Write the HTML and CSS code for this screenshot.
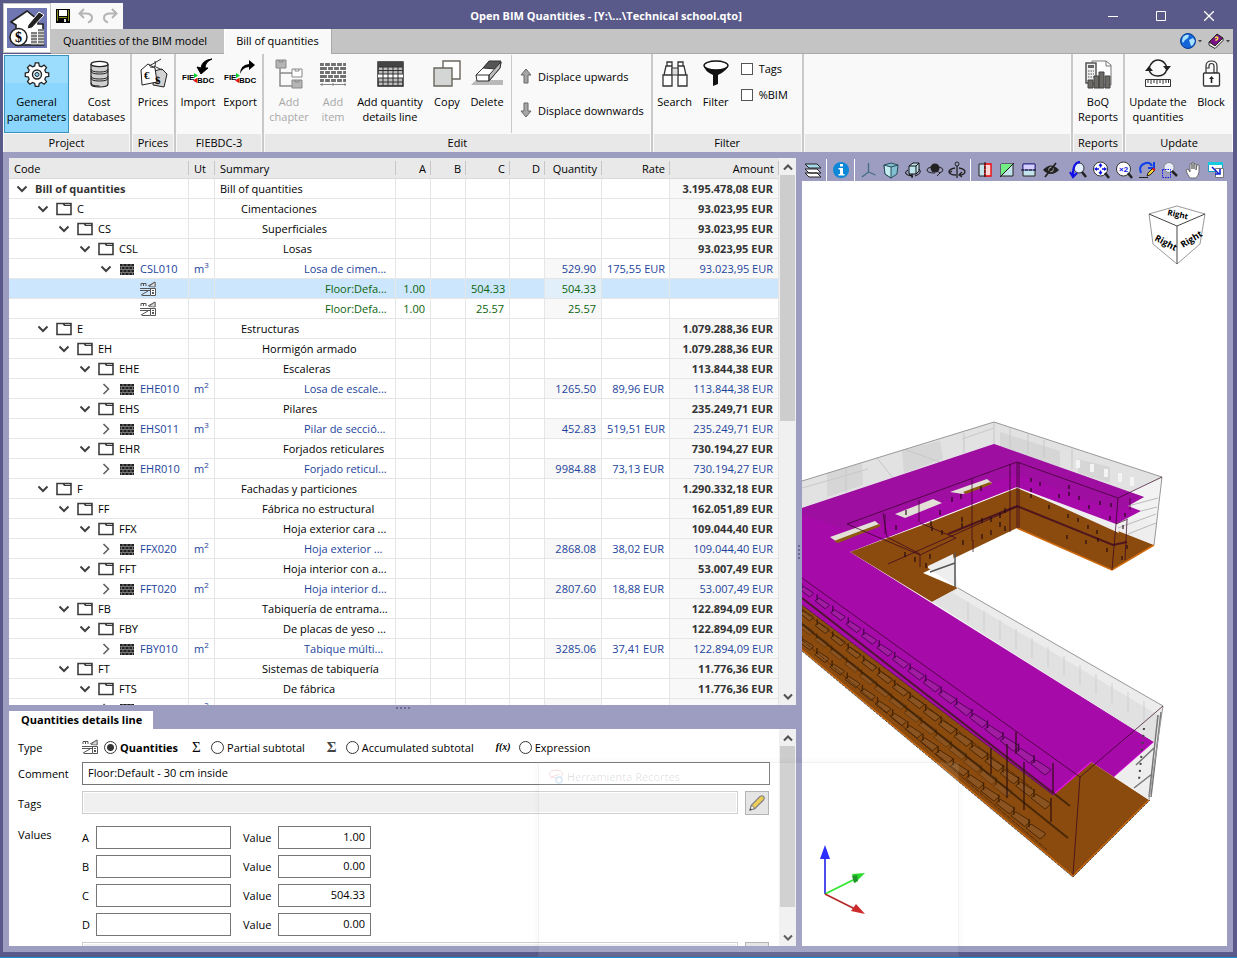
FILE: index.html
```html
<!DOCTYPE html>
<html lang="en">
<head>
<meta charset="utf-8">
<title>Open BIM Quantities</title>
<link rel="stylesheet" href="styles.css">
</head>
<body>
<svg class="sprite" aria-hidden="true">
  <symbol id="i-down" viewBox="0 0 12 12"><path d="M1.5 3.5 6 8l4.500-4.500" fill="none" stroke="#404040" stroke-width="2"/></symbol>
  <symbol id="i-right" viewBox="0 0 12 12"><path d="M3.500 1 8.500 6l-5 5" fill="none" stroke="#606060" stroke-width="1.600"/></symbol>
  <symbol id="i-folder" viewBox="0 0 16 16"><path d="M1 2.500h14v11H1z" fill="#fff" stroke="#3c3c3c" stroke-width="1.600"/><path d="M6 2h9v3H8z" fill="#3c3c3c"/><path d="M9 3.500h5" stroke="#bbb"/></symbol>
  <symbol id="i-wall" viewBox="0 0 16 16"><path d="M1 3h14v11H1z" fill="#222"/><path d="M1 5.500h14M1 8.500h14M1 11.500h14M4 3v2M8 3v2M12 3v2M2.500 6v2M6 6v2M10 6v2M13.500 6v2M4 9v2M8 9v2M12 9v2M2.500 12v2M6 12v2M10 12v2M13.500 12v2" stroke="#ccc" stroke-width=".5"/></symbol>
  <symbol id="i-detail" viewBox="0 0 16 16"><path d="M1 5V2.500h5V5M3.500 2.500V5M8 5l7-4v5M0 7.500h11M0 9.500h10M1 14l7-4M2 14.500h8" fill="none" stroke="#555"/><path d="M9 5.500 15 1v5z" fill="#ddd" stroke="#555" stroke-width=".7"/><path d="M10.500 7.500h5v7h-5z" fill="#fff" stroke="#555"/><path d="M12 9h2v1h-2zM12 11h2v2h-2z" fill="#555"/></symbol>
</svg>

<div class="window">
  <header class="header">
    <button class="app-button" aria-label="Application menu">
      <svg viewBox="0 0 40 40" width="40" height="40"><path d="M0 0h40v40H0z" fill="#6f76b2"/><path d="M4 14 20 3l11 9v4h5v21H9V17z" fill="#fff" stroke="#222" stroke-width="1.600"/><path d="m21 17 11-13 5 3-12 13-5 1z" fill="#222" stroke="#fff"/><path d="M24 24h6v13h-6zM31 21h6v16h-6z" fill="#ccc"/><path d="M24 25h6M24 28h6M24 31h6M24 34h6M31 22h6M31 25h6M31 28h6M31 31h6M31 34h6M18 37h20" stroke="#333"/><circle cx="11.500" cy="29" r="8.500" fill="#fff" stroke="#222" stroke-width="1.500"/><text x="11.500" y="34" text-anchor="middle" class="svg-dollar">$</text></svg>
    </button>
    <div class="quick">
      <button class="flat" aria-label="Save"><svg viewBox="0 0 14 14" width="14" height="14"><path d="M0 0h14v14H0z" fill="#000"/><path d="M1 1h1v11H1zM12 1h1v11h-1zM3 8h8v1H3z" fill="#8c8c20"/><path d="M3 1h8v6H3z" fill="#fff"/><path d="M8 10h2v3H8z" fill="#ddd"/></svg></button>
      <button class="flat" aria-label="Undo"><svg viewBox="0 0 16 16" width="16" height="16"><path d="M6 1 1.500 5.500 6 10M2 5.500h6q6 0 6 4.500 0 3-4 4.500" fill="none" stroke="#b4b4b4" stroke-width="2"/></svg></button>
      <button class="flat" aria-label="Redo"><svg viewBox="0 0 16 16" width="16" height="16"><path d="m10 1 4.500 4.500L10 10M14 5.500H8Q2 5.500 2 10q0 3 4 4.500" fill="none" stroke="#b4b4b4" stroke-width="2"/></svg></button>
    </div>
    <h1 class="title">Open BIM Quantities - [Y:\...\Technical school.qto]</h1>
    <div class="controls">
      <button class="flat" aria-label="Minimize"><svg viewBox="0 0 10 10" width="10" height="10"><path d="M0 5.500h10" stroke="#fff"/></svg></button>
      <button class="flat" aria-label="Maximize"><svg viewBox="0 0 10 10" width="10" height="10"><path d="M.5.5h9v9h-9z" fill="none" stroke="#fff"/></svg></button>
      <button class="flat" aria-label="Close"><svg viewBox="0 0 10 10" width="10" height="10"><path d="m0 0 10 10M10 0 0 10" stroke="#fff" stroke-width="1.300"/></svg></button>
    </div>
    <nav class="tabs">
      <button class="tab">Quantities of the BIM model</button>
      <button class="tab tab-on">Bill of quantities</button>
      <div class="tab-tools">
        <button class="flat" aria-label="Language"><svg viewBox="0 0 22 16" width="22" height="16"><circle cx="8" cy="8" r="7.500" fill="#1565d8" stroke="#0a3d91"/><path d="M3 4q3-3 6-2l-1 3-3 2-2 3-1-2zM9 7l4-2 2 3-2 4-2 1-1-3z" fill="#a8e2ff"/><path d="m18 7 4 0-2 2.500z" fill="#444"/></svg></button>
        <button class="flat" aria-label="Help"><svg viewBox="0 0 22 16" width="22" height="16"><path d="M1 9 9 1l6 4-8 8z" fill="#7c1283" stroke="#222"/><path d="M1 9v3l6 3.500 8-8V5l-8 8z" fill="#fff" stroke="#222"/><path d="M7 5q2-2 3 0 0 1.500-2 2v1" fill="none" stroke="#f5e64a" stroke-width="1.300"/><path d="m18 7 4 0-2 2.500z" fill="#444"/></svg></button>
      </div>
    </nav>
  </header>

  <section class="ribbon">
    <div class="group">
      <div class="tools">
        <button class="tool tool-lg tool-on"><svg viewBox="0 0 32 32"><path d="m14 3h4l.7 3.500 2.600 1.100 3-2 2.900 2.900-2 3 1.100 2.600 3.500.7v4l-3.500.7-1.100 2.600 2 3-2.900 2.900-3-2-2.600 1.100-.7 3.500h-4l-.7-3.500-2.600-1.100-3 2-2.900-2.900 2-3-1.100-2.600-3.500-.7v-4l3.500-.7 1.100-2.600-2-3 2.900-2.900 3 2 2.600-1.100z" transform="translate(2.400 2.400) scale(.85)" fill="#fff" stroke="#222" stroke-width="1.500"/><circle cx="16" cy="16.500" r="4.500" fill="#e8f6fd" stroke="#222" stroke-width="1.400"/><circle cx="16" cy="16.500" r="2" fill="#8ad6ff" stroke="#222"/></svg>General<br>parameters</button>
        <button class="tool tool-lg"><svg viewBox="0 0 32 32"><path d="M8 6v20q0 3 8.500 3t8.500-3V6" fill="#d0d0d0" stroke="#222" stroke-width="1.200"/><ellipse cx="16.500" cy="6" rx="8.500" ry="2.700" fill="#fff" stroke="#222" stroke-width="1.200"/><path d="M8 11q0 3 8.500 3t8.500-3M8 13q0 3 8.500 3t8.500-3M8 18q0 3 8.500 3t8.500-3M8 20q0 3 8.500 3t8.500-3M8 25q0 3 8.500 3" fill="none" stroke="#222"/></svg>Cost<br>databases</button>
      </div><div class="caption">Project</div>
    </div>
    <div class="group">
      <div class="tools">
        <button class="tool tool-xs"><svg viewBox="0 0 32 32"><path d="m17 13 8-2 5 5-3 13-11-2z" fill="#d2d2d2" stroke="#222"/><path d="m4 12 7-6 7 4 2 14-15 3z" fill="#fff" stroke="#222"/><path d="M12 8q6-3 12-7M13 9q7 2 5-6M17 8l8 4" fill="none" stroke="#333"/><text x="7" y="21" class="svg-coin">€</text><text x="18" y="26" class="svg-coin">$</text></svg>Prices</button>
      </div><div class="caption">Prices</div>
    </div>
    <div class="group">
      <div class="tools">
        <button class="tool tool-sm"><svg viewBox="0 0 32 32"><path d="M30 1q-10 1-11 9l-4-1 4 7 7-6-3 0q0-6 7-9z" fill="#000" stroke="#000"/><text x="0" y="22" class="svg-fie">FIE</text><text x="15" y="25" class="svg-fie">BDC</text><path d="m12 15 4 2.500-4 2.500z" fill="#0bd32b"/><path d="m15 20-4 2.500 4 2.500z" fill="#e01515"/></svg>Import</button>
        <button class="tool tool-sm"><svg viewBox="0 0 32 32"><path d="M16 16q0-9 9-10V2l6 5-6 5V9q-6 0-9 7z" fill="#000"/><text x="0" y="22" class="svg-fie">FIE</text><text x="15" y="25" class="svg-fie">BDC</text><path d="m12 15 4 2.500-4 2.500z" fill="#0bd32b"/><path d="m15 20-4 2.500 4 2.500z" fill="#e01515"/></svg>Export</button>
      </div><div class="caption">FIEBDC-3</div>
    </div>
    <div class="group">
      <div class="tools">
        <button class="tool tool-md" disabled><svg viewBox="0 0 32 32"><path d="M7 9v19h12M7 15h12" fill="none" stroke="#8a8a8a" stroke-width="1.500"/><path d="M3 2h10v8H3z" fill="#b5b5b5" stroke="#888"/><path d="M19 11h10v8H19z" fill="#fff" stroke="#888"/><path d="M19 22h10v8H19z" fill="#b5b5b5" stroke="#888"/><path d="M6 2v2h4V2M22 11v2h4v-2M22 22v2h4v-2" fill="none" stroke="#888"/></svg>Add<br>chapter</button>
        <button class="tool tool-xs" disabled><svg viewBox="0 0 32 32"><path d="M3 5h26v19H3z" fill="#707070"/><path d="M3 8.500h26M3 12.500h26M3 16.500h26M3 20.500h26M7.500 5v3M13.500 5v3M19.500 5v3M25.500 5v3M10.500 9v3M16.500 9v3M22.500 9v3M7.500 13v3M13.500 13v3M19.500 13v3M25.500 13v3M10.500 17v3M16.500 17v3M22.500 17v3M7.500 21v3M13.500 21v3M19.500 21v3M25.500 21v3" stroke="#f9f9f9" stroke-width="1.200"/><path d="M3 26.500h26M5 25v3M16 25v3M28 25v3" stroke="#888"/></svg>Add<br>item</button>
        <button class="tool tool-xl"><svg viewBox="0 0 32 32"><path d="M4 4h25v24H4z" fill="#bcbcbc" stroke="#222" stroke-width="1.400"/><path d="M4 4h25v5H4z" fill="#444"/><path d="M4 16h25v4H4z" fill="#fff"/><path d="M4 9h25M4 12.500h25M4 16h25M4 20h25M4 24h25M9 9v19M14 9v19M19 9v19M24 9v19" stroke="#333"/></svg>Add quantity<br>details line</button>
        <button class="tool tool-xs"><svg viewBox="0 0 32 32"><path d="M12 3h17v18H12z" fill="#fff" stroke="#6a665c" stroke-width="1.400"/><path d="M3 10h18v18H3z" fill="#d4d6d5" stroke="#6a665c" stroke-width="1.400"/></svg>Copy</button>
        <button class="tool tool-xs"><svg viewBox="0 0 32 32"><path d="M0 27 5 22h27v5z" fill="#b9b9b9"/><path d="m5 17 13-13h12l-1 6-11 13H6z" fill="#fff" stroke="#333"/><path d="m12 10 6-7h12l-5 8z" fill="#555" stroke="#333"/><path d="m18 17 12-13-1 6-11 13z" fill="#bbb" stroke="#333"/><path d="M5 17h13v6" fill="none" stroke="#333"/></svg>Delete</button>
        <div class="stack">
          <button class="mini"><svg viewBox="0 0 12 16" width="12" height="16"><path d="m6 1 5 6H8v8H4V7H1z" fill="#a6a6a6" stroke="#666"/></svg>Displace upwards</button>
          <button class="mini"><svg viewBox="0 0 12 16" width="12" height="16"><path d="m6 15 5-6H8V1H4v8H1z" fill="#a6a6a6" stroke="#666"/></svg>Displace downwards</button>
        </div>
      </div><div class="caption">Edit</div>
    </div>
    <div class="group group-filter">
      <div class="tools">
        <button class="tool tool-sm"><svg viewBox="0 0 32 32"><path d="M8 4h5v4H8zM19 4h5v4h-5zM7 8h6v9H5zM19 8h6l2 9h-8zM4 17h9v11H4zM19 17h9v11h-9z" fill="#fff" stroke="#333" stroke-width="1.300"/><path d="M13 10h6v7h-6z" fill="#ddd" stroke="#333"/></svg>Search</button>
        <button class="tool tool-xs"><svg viewBox="0 0 32 32"><path d="M4 7q0 6 9 10v11l5-2v-9q10-5 10-10" fill="#111"/><ellipse cx="16" cy="7.500" rx="12" ry="4.500" fill="#fff" stroke="#111" stroke-width="1.400"/></svg>Filter</button>
        <div class="checks">
          <label class="check"><input type="checkbox">Tags</label>
          <label class="check"><input type="checkbox">%BIM</label>
        </div>
      </div><div class="caption">Filter</div>
    </div>
    <div class="group group-fill"><div class="tools"></div><div class="caption"></div></div>
    <div class="group">
      <div class="tools">
        <button class="tool tool-md"><svg viewBox="0 0 32 32"><path d="M10 3h14l5 4v20H10z" fill="#fff" stroke="#777"/><path d="M24 3v5h5" fill="none" stroke="#777"/><path d="M4 5h10v20H4z" fill="#eee" stroke="#555" stroke-width="1.500"/><path d="M6 7h6v3H6z" fill="#666"/><path d="M6 13h6M6 16h6M6 19h6" stroke="#555" stroke-dasharray="1.500 1"/><path d="M6 22h5v8H6zM12 18h5v12h-5zM17 14h5v16h-5zM23 18h5v12h-5z" fill="#6d6b66" stroke="#444"/></svg>BoQ<br>Reports</button>
      </div><div class="caption">Reports</div>
    </div>
    <div class="group">
      <div class="tools">
        <button class="tool tool-lg"><svg viewBox="0 0 32 32"><path d="M7 10q3-8 9-8t9 7M25 11q-2 7-9 7t-9-6" fill="none" stroke="#222" stroke-width="1.400"/><path d="m21 8 8 0-4 5zM3 13l4-5 4 5z" fill="#222"/><path d="M3.500 21.500h25v7h-25z" fill="#fff" stroke="#333"/><path d="M6 22v3M9 22v4M12 22v3M15 22v4M18 22v3M21 22v4M24 22v3M26.500 22v3" stroke="#333"/></svg>Update the<br>quantities</button>
        <button class="tool tool-sm"><svg viewBox="0 0 32 32"><path d="M11 15V8q0-5 5.500-5T22 8v7h-3V8q0-2.500-2.500-2.500T14 8v2h-3" fill="#fff" stroke="#333" stroke-width="1.200"/><rect x="8.500" y="15" width="16" height="13" rx="1" fill="#fff" stroke="#333" stroke-width="1.300"/><path d="M16.500 25v-5" stroke="#222" stroke-width="1.600"/><path d="m14 21 2.500-3 2.500 3z" fill="#222"/></svg>Block</button>
      </div><div class="caption">Update</div>
    </div>
  </section>

  <main class="work">
    <div class="left">
      <section class="pane grid-pane">
        <div class="grid-clip">
          <table class="grid">
            <colgroup><col class="c-code"><col class="c-ut"><col class="c-sum"><col class="c-a"><col class="c-a"><col class="c-c"><col class="c-a"><col class="c-qty"><col class="c-rate"><col class="c-amt"></colgroup>
            <thead><tr><th class="l">Code</th><th class="l">Ut</th><th class="l">Summary</th><th>A</th><th>B</th><th>C</th><th>D</th><th>Quantity</th><th>Rate</th><th>Amount</th></tr></thead>
            <tbody id="rows"></tbody>
          </table>
        </div>
        <div class="scroll">
          <button class="flat" aria-label="Scroll up"><svg viewBox="0 0 10 8" width="10" height="8"><path d="M1 6.500 5 2.500l4 4" fill="none" stroke="#505050" stroke-width="2"/></svg></button>
          <div class="track"><div class="thumb thumb-grid"></div></div>
          <button class="flat" aria-label="Scroll down"><svg viewBox="0 0 10 8" width="10" height="8"><path d="m1 1.500 4 4 4-4" fill="none" stroke="#505050" stroke-width="2"/></svg></button>
        </div>
      </section>
      <div class="split-h"><i></i><i></i><i></i><i></i></div>
      <section class="details">
        <h2 class="details-tab">Quantities details line</h2>
        <div class="pane details-body">
          <form class="form">
            <span class="f-label">Type</span>
            <div class="types">
              <svg class="ico" aria-hidden="true"><use href="#i-detail"/></svg><label class="radio radio-on"><input type="radio" name="type" checked>Quantities</label>
              <span class="sigma">Σ</span><label class="radio"><input type="radio" name="type">Partial subtotal</label>
              <span class="sigma sigma-2">Σ</span><label class="radio"><input type="radio" name="type">Accumulated subtotal</label>
              <span class="fx">f(x)</span><label class="radio"><input type="radio" name="type">Expression</label>
            </div>
            <label class="f-label" for="comment">Comment</label>
            <input class="text" id="comment" type="text" value="Floor:Default - 30 cm inside">
            <label class="f-label" for="tags">Tags</label>
            <div class="with-button"><input class="text text-off" id="tags" type="text" disabled><button type="button" class="edit" aria-label="Edit tags"><svg viewBox="0 0 18 18" width="18" height="18"><path d="m2 16 1.500-5L12 2.500q2-1.500 3.500 0t0 3.500L7 14.500z" fill="#edc846" stroke="#777" stroke-width="1.200"/><path d="m2 16 1.500-5L7 14.500z" fill="#f3f3f3" stroke="#666"/><path d="m1.500 16.500 1-2.500 1.500 1.500z" fill="#444"/></svg></button></div>
            <span class="f-label f-top">Values</span>
            <div class="values">
              <label for="a">A</label><input class="text" id="a" type="text"><label for="av">Value</label><input class="text num" id="av" type="text" value="1.00">
              <label for="b">B</label><input class="text" id="b" type="text"><label for="bv">Value</label><input class="text num" id="bv" type="text" value="0.00">
              <label for="c">C</label><input class="text" id="c" type="text"><label for="cv">Value</label><input class="text num" id="cv" type="text" value="504.33">
              <label for="d">D</label><input class="text" id="d" type="text"><label for="dv">Value</label><input class="text num" id="dv" type="text" value="0.00">
            </div>
            <span class="f-label"></span>
            <div class="with-button"><input class="text text-off" type="text" disabled aria-label="Remarks"><button type="button" class="edit" aria-label="Edit remarks"></button></div>
          </form>
          <div class="scroll">
            <button class="flat" aria-label="Scroll up"><svg viewBox="0 0 10 8" width="10" height="8"><path d="M1 6.500 5 2.500l4 4" fill="none" stroke="#505050" stroke-width="2"/></svg></button>
            <div class="track"><div class="thumb thumb-form"></div></div>
            <button class="flat" aria-label="Scroll down"><svg viewBox="0 0 10 8" width="10" height="8"><path d="m1 1.500 4 4 4-4" fill="none" stroke="#505050" stroke-width="2"/></svg></button>
          </div>
        </div>
      </section>
    </div>

    <div class="split-v"><i></i><i></i><i></i><i></i></div>

    <section class="viewer">
      <div class="viewbar">
        <button class="flat" aria-label="Layers"><svg viewBox="0 0 18 18"><path d="m1 12 4 4h12l-4-4zM1 8l4 4h12l-4-4z" fill="#fff" stroke="#222"/><path d="m1 3 4 4h12l-4-4z" fill="#a5dbe8" stroke="#222"/></svg></button><span class="bar-sep"></span>
        <button class="flat" aria-label="Information"><svg viewBox="0 0 18 18"><circle cx="9" cy="9" r="8" fill="#0d87d8"/><path d="M8 3h3v2.500H8zM6.500 7H11v6h1.500v1.500h-6V13H8V8.500H6.500z" fill="#fff"/></svg></button><span class="bar-sep"></span>
        <button class="flat" aria-label="Axes"><svg viewBox="0 0 18 18"><path d="M8.500 2v9L2 16M8.500 11l7 3" fill="none" stroke="#406e80" stroke-width="1.300"/></svg></button>
        <button class="flat" aria-label="Box view"><svg viewBox="0 0 18 18"><path d="m2 4 7-2 7 2-1 9-6 4-6-4z" fill="#82bfd0" stroke="#294b58"/><path d="m2 4 7 2v11l-6-4z" fill="#c4edf2" stroke="#294b58"/><path d="m9 6 7-2" stroke="#294b58"/></svg></button>
        <button class="flat" aria-label="Orbit box"><svg viewBox="0 0 18 18"><path d="m5 5 4-3h6v8l-3 3H5z" fill="#bde3ed" stroke="#111"/><path d="M5 5h7v8M12 5l3-3M4 9q-4 2-2 4 2 2 7 2M15 8q4 4-4 7M8 13v4M5 13l4 3" fill="none" stroke="#111"/></svg></button>
        <button class="flat" aria-label="Orbit"><svg viewBox="0 0 18 18"><circle cx="9" cy="7" r="4.500" fill="#222"/><path d="M5 6q-4 1-4 3 0 3 8 3M13 6q4 1 4 3t-4 3M11 10l3 2-3 3" fill="none" stroke="#222"/></svg></button>
        <button class="flat" aria-label="Turn"><svg viewBox="0 0 18 18"><circle cx="9" cy="3" r="2" fill="none" stroke="#222"/><path d="M9 5v12M7 7q-6 1-6 4 1 3 7 3M11 7q6 1 6 4-1 3-5 3M14 11l-3 3 3 2M4 10l-3 2" fill="none" stroke="#222" stroke-width="1.300"/></svg></button><span class="bar-sep"></span>
        <button class="flat" aria-label="Vertical section"><svg viewBox="0 0 18 18"><path d="M3 3h6v12H3z" fill="#c3e3ed" stroke="#222"/><path d="M9 3h6v12H9z" fill="#ffd5d5" stroke="#f00000" stroke-width="1.300"/><path d="M9 1v16" stroke="#111" stroke-dasharray="3 1"/></svg></button>
        <button class="flat" aria-label="Diagonal section"><svg viewBox="0 0 18 18"><path d="M3 3h12v12H3z" fill="#c3e3ed" stroke="#222"/><path d="M3 3h12L3 15z" fill="#73ee85"/><path d="M2 16 16 2" stroke="#111"/></svg></button>
        <button class="flat" aria-label="Horizontal section"><svg viewBox="0 0 18 18"><path d="M3 3h12v12H3z" fill="#c3e3ed" stroke="#222"/><path d="M3 3h12v6H3z" fill="#d5cfff" stroke="#3030a0"/><path d="M1 9h16" stroke="#111" stroke-dasharray="3 1"/></svg></button>
        <button class="flat" aria-label="Hide"><svg viewBox="0 0 18 18"><path d="M1 9q8-9 16 0-8 8-16 0z" fill="#222"/><circle cx="9" cy="8.500" r="2.300" fill="none" stroke="#aaa"/><path d="M3 16 14 2" stroke="#222" stroke-width="1.700"/></svg></button>
        <span class="bar-group">
        <button class="flat" aria-label="Previous zoom"><svg viewBox="0 0 18 18"><circle cx="10" cy="7" r="5" fill="#e4efff" stroke="#333"/><path d="m13 11 4 5" stroke="#222" stroke-width="2.500"/><path d="M11 1Q4 1 4 14M1 11l3 5 4-4" fill="none" stroke="#1010e8" stroke-width="2.200"/></svg></button>
        <button class="flat" aria-label="Zoom extents"><svg viewBox="0 0 18 18"><circle cx="8.500" cy="8" r="7" fill="#fff" stroke="#333"/><path d="m13 12 4 5" stroke="#222" stroke-width="2.500"/><path d="M8.500 3v10M3.500 8h10" stroke="#1010e8" stroke-width="1.600" stroke-dasharray="3.500 3"/><path d="m6.500 5 2-3 2 3zM6.500 11l2 3 2-3zM5 6 2 8l3 2zM12 6l3 2-3 2z" fill="#1010e8"/></svg></button>
        <button class="flat" aria-label="Zoom x2"><svg viewBox="0 0 18 18"><circle cx="8.500" cy="8" r="7" fill="#fff" stroke="#333"/><path d="m13 12 4 5" stroke="#222" stroke-width="2.500"/><text x="4" y="11" class="svg-x2">×2</text></svg></button>
        <button class="flat" aria-label="Redraw"><svg viewBox="0 0 18 18"><path d="M3 12Q0 4 8 2q4-1 6 3M16 1v6h-6" fill="none" stroke="#1040e8" stroke-width="2"/><path d="M1 16.500h9" stroke="#222"/><path d="m9 15 1-3 5-5 2 2-5 5z" fill="#f3d336" stroke="#222"/><path d="m14 8 1.500-1.500 2 2L16 10z" fill="#e01515"/></svg></button>
        <button class="flat" aria-label="Zoom window"><svg viewBox="0 0 18 18"><circle cx="8" cy="6.500" r="5" fill="#e6ecfb" stroke="#888"/><path d="m11 10 5 5" stroke="#222" stroke-width="2.500"/><path d="M1.500 8.500h8v8h-8z" fill="none" stroke="#1010e8" stroke-dasharray="1.500 1"/></svg></button>
        <button class="flat" aria-label="Pan"><svg viewBox="0 0 18 18"><path d="M6 17Q3 13 2 9l2-1 2 3V3q1-1 2 0v5V2q1-1 2 0v6V3q1-1 2 0v6l1-5q1-1 2 0v7q-1 4-3 6z" fill="#fff" stroke="#555" stroke-width=".8"/></svg></button>
        <button class="flat" aria-label="Export view"><svg viewBox="0 0 18 18"><path d="M1.500 1.500h14v9h-14z" fill="#fff" stroke="#16a0bf"/><path d="M1 1h15v3H1z" fill="#16cbe0"/><path d="M8.500 7.500h8v9h-8z" fill="#fff" stroke="#777"/><path d="m5 6 7 7M8 13h5V8" fill="none" stroke="#1025d0" stroke-width="1.600"/></svg></button>
        </span>
      </div>
      <svg class="scene" viewBox="802 181 425 765" preserveAspectRatio="none" role="img" aria-label="3D model of the building">
        <g id="cube"><path d="m1149 214 28-8 28 8-5 30-23 20-24-20z" fill="#fff" stroke="#999"/><path d="m1149 214 28 12 28-12M1177 226v38" fill="none" stroke="#444"/>
          <text transform="translate(1154 240) rotate(28)" class="svg-face">Right</text><text transform="translate(1183 248) rotate(-32)" class="svg-face">Right</text><text transform="translate(1167 215) rotate(12)" class="svg-face svg-face-top">Right</text></g>
        <path d="M802 481 994 422l168 55-8 68-38-20-122-81-192 64z" fill="#e2e2e2"/>
        <path d="m1162 477-44 20 0 42 36 6z" fill="#f2f2f2"/>
        <path d="m827 473 35-10 1 22-36 12zM902 450l38-9 3 18-39 14zM1000 432l60 19v16l-60-20zM1078 459l32 8v16l-32-10z" fill="#d6d6d6"/>
        <path d="m802 488 66-19M962 439l32-11M994 422v22M964 433v20M906 450l34 12M877 458l16 20M846 468v24M1010 428v20M1028 434v20M1044 440v18M1072 449v20" stroke="#c8c8c8" fill="none"/>
        <path d="M1076 460h4v8h-4zM1090 464h4v8h-4zM1104 469h4v8h-4zM1118 473h4v9h-4zM1130 477h4v9h-4z" fill="#f4f4f4"/>
        <path d="M928 523 1017 488 1154 545 1112 570 1017 528 923 573 958 588 932 602 850 552z" fill="#8c4b0e"/>
        <path d="m1017 487 99 37 3 9z" fill="#eee"/><path d="m1116 524 26-7 15 8-3 20-36-14z" fill="#eee"/>
        <path d="m1128 506 30-8M1141 511l16-4M1118 528l38-14M1128 534l28-11" stroke="#bbb" fill="none"/>
        <path d="m928 566 25-12 5 34-30-20z" fill="#eee"/><path d="m930 572 25-9M955 553v34" stroke="#555" stroke-width="1.500" fill="none"/>
        <path d="m802 508 192-64 150 53-16 9 13 5-25 13-99-37-92 36-75 29 304 190-40 35-23-15-38 33-251-190z" fill="#a60aa8"/>
        <path d="m802 508 192-64 150 53-28 14-99-37-160 60-55-20z" fill="#951199" opacity=".5"/>
        <path d="m830 537 45-16 5 4-43 17zM895 514l38-15 9 4-37 15zM950 492l37-13 5 4-29 11z" fill="#e3e0d8"/><path d="m834 541 45-17 2 2-43 17zM963 492l27-10 2 2-26 10z" fill="#8c5a10"/>
        <path d="m802 605 251 190 38-33 23 15 35 23-76 77-271-227z" fill="#8c4b0e"/>
        <path d="m802 650 271 226 76-76" fill="none" stroke="#cf6a0c" stroke-width="1.500"/><path d="m802 651 271 226 77-77" fill="none" stroke="#555" stroke-dasharray="3 1"/>
        <path d="m1053 795 38-33M1114 777l40-35" stroke="#e010e0" stroke-width="1.500"/>
        <path d="m1017 528 95 42 42-25" fill="none" stroke="#cf6a0c" stroke-width="1.500"/>
        <path d="m958 588 205 118-9 36-222-140z" fill="#e1e1e1"/><path d="m958 588 205 118-3 10-207-123z" fill="#ececec"/>
        <path d="m1163 706-14 94-35-23 40-35z" fill="#eee"/>
        <path d="m1136 765 18-17M1134 788l18-14M1158 715l-9 82M1161 712l-10 85" stroke="#777" stroke-width="1.500" fill="none"/><path d="m1144 728-5 52" stroke="#444" stroke-dasharray="2 5" stroke-width="2"/>
        <path d="m802 481 192-59 168 55-8 68M958 588l205 118-14 94" fill="none" stroke="#999"/>
        <g fill="none" stroke="#330022" stroke-opacity=".7"><path d="m847 524 170-62 101 36 44-21M847 524l73 31 36-17-36-15M920 555v12M1118 498l-2 26-4 46M1017 462v66M1010 464v68M1019 462v66M888 564l129-57M802 578l278 199 83-71M1080 777l-7 98M802 605l251 190M883 513l4 24M972 479v62M919 500v22M973 540v12M885 514v20M887 537l33 17M1130 498v12M1127 520l-2 40M1116 524l12-5"/><path d="m948 534 69-28 96 39 14-3" stroke-width="2"/></g>
        <g id="details"></g>
        <path d="M825 894v-36" stroke="#1a1ae8" stroke-width="1.700"/><path d="m820 859 5-14 5 14z" fill="#1a1aff"/><path d="m825 894 30-15" stroke="#19e619" stroke-width="1.700"/><path d="m852 874 13-1-10 10z" fill="#16d816"/><path d="m852 876 5-1 1 6-4 2z" fill="#0b8a17"/><path d="m825 894 30 15" stroke="#b01212" stroke-width="1.700"/><path d="m856 904 9 10-14-3z" fill="#c81616"/>
      </svg>
    </section>
  </main>
  <div class="ghost"><svg viewBox="0 0 16 16" width="16" height="16"><ellipse cx="8" cy="5" rx="6.500" ry="4" fill="none" stroke="#e9a0a0"/><path d="m2 9 9-4" stroke="#e9a0a0"/><circle cx="11" cy="11" r="3" fill="none" stroke="#8ec3e9" stroke-width="1.500"/></svg>Herramienta Recortes</div>
</div>
<script src="app.js"></script>
</body>
</html>
```
FILE: styles.css
```css
* { box-sizing: border-box; }
body { margin: 0; font: 11px/15px "Open Sans", "Noto Sans", sans-serif; color: #000; }
button, input { font: inherit; color: inherit; }
button { padding: 0; border: 0; background: none; }
.sprite { display: none; }
.flat { display: grid; place-items: center; }
.window { position: relative; display: flex; flex-direction: column; height: 100vh; overflow: hidden; padding: 0 4px 5px 3px; background: #5a5a8a; border-bottom: 1px solid #1b8fd2; }

.header { display: grid; grid-template: 29px 25px / 48px 72px 1fr 144px; }
.app-button { grid-row: 1 / 3; display: grid; place-items: center; margin: 3px 0 1px; background: #fff; border: 1px solid #c4c4c4; }
.quick { display: flex; align-items: center; justify-content: space-around; margin-top: 3px; padding: 0 1px; background: #f9f9f9; }
.title { margin: 0; align-self: center; padding-top: 3px; text-align: center; font-size: 11px; font-weight: 700; line-height: 20px; color: #fff; }
.controls { display: grid; grid-template-columns: repeat(3, 1fr); padding-top: 3px; }
.tabs { grid-column: 2 / 5; display: flex; background: #c4c4c4; border-bottom: 1px solid #a9a9a9; }
.tab { padding: 0 17px 2px 12px; }
.tab-on { margin-bottom: -1px; padding: 0 12px 3px 11px; background: #f9f9f9; border-left: 1px solid #fff; border-right: 1px solid #a9a9a9; }
.tab-tools { display: flex; gap: 6px; margin-left: auto; padding-right: 3px; }

.ribbon { display: flex; height: 98px; background: #f9f9f9; }
.group { display: flex; flex-direction: column; border-right: 2px solid #c9c9c9; }
.group:last-child { border-right: 0; }
.group-fill { flex: 1; }
.group-filter { width: 151px; }
.tools { display: flex; flex: 1; padding: 1px; }
.caption { height: 18px; margin: 0 1px; background: #e8e8e8; text-align: center; line-height: 18px; }
.tool { display: flex; flex-direction: column; align-items: center; justify-content: flex-start; line-height: 15px; border: 1px solid transparent; white-space: nowrap; padding-top: 2px; }
.tool svg { width: 32px; height: 32px; margin-bottom: 4px; flex: none; overflow: visible; }
.tool:disabled { color: #a8a8a8; }
.tool-xs { width: 40px; }
.tool-sm { width: 42px; }
.tool-md { width: 48px; }
.tool-lg { width: 60px; }
.tool-xl { width: 74px; }
.tool-on { width: 65px; background: linear-gradient(#9cdcfc 35%, #8ad6ff 35%); border-color: #3a93bd; }
.group:last-child .tool-lg { width: 64px; }
.stack { display: flex; flex-direction: column; gap: 18px; margin-left: 4px; padding: 13px 6px 0 8px; border-left: 1px solid #c9c9c9; }
.mini { display: flex; align-items: center; gap: 6px; white-space: nowrap; }
.checks { display: flex; flex-direction: column; gap: 11px; padding: 6px 0 0 5px; }
.check { display: flex; align-items: center; gap: 6px; }
.check input { appearance: none; width: 12px; height: 12px; margin: 0; background: #fff; border: 1px solid #555; }

.work { flex: 1; min-height: 0; display: grid; grid-template-columns: minmax(0, 787fr) 6px minmax(0, 425fr); padding: 6px; background: #9d9dc1; }
.left { display: grid; grid-template-rows: minmax(0, 547fr) 6px minmax(0, 235fr); min-height: 0; }
.pane { display: flex; min-height: 0; background: #fff; overflow: hidden; }
.grid-clip { flex: 1; min-width: 0; overflow: hidden; }
.grid { width: 100%; table-layout: fixed; border-collapse: separate; border-spacing: 0; }
.c-code { width: 180px; } .c-ut { width: 26px; } .c-a { width: 35px; } .c-c { width: 44px; }
.c-qty { width: 57px; } .c-rate { width: 68px; } .c-amt { width: 109px; }
.grid th { height: 21px; padding: 0 5px; font-weight: 400; text-align: right; background: linear-gradient(#c6c6c6, #c6c6c6) right 3px / 1px 14px no-repeat #e9e9e9; border-bottom: 1px solid #d9d9d9; white-space: nowrap; }
.grid th.l { text-align: left; }
.grid td { height: 20px; padding: 0 5px; line-height: 19px; text-align: right; white-space: nowrap; overflow: hidden; border-right: 1px solid #e6e6e6; border-bottom: 1px solid #e6e6e6; }
.grid td.l { text-align: left; }
.grid .soft { background: #f8f8f8; }
.grid .total { font-weight: 700; color: #333; }
.grid .item { color: #1c449c; }
.grid .chapter .node, .grid .root-row .node { color: #000; }
.grid .line { color: #0b640b; }
.grid .picked td { background: #cbe6fd; }
.grid .picked .soft { background: #e1effa; }
.grid sup { font-size: 8px; line-height: 0; vertical-align: 5px; }
.node { display: flex; align-items: center; height: 19px; }
.node .chev { width: 12px; height: 12px; margin: 0 7px 0 2px; flex: none; }
.ico { width: 16px; height: 16px; flex: none; }
.node .ico { margin-right: 5px; }
.node .root { font-weight: 700; color: #333; }
.pad { display: inline-block; }

.scroll { display: flex; flex-direction: column; width: 17px; flex: none; background: #f0f0f0; padding: 0 1px; }
.scroll button { height: 17px; flex: none; }
.track { flex: 1; }
.thumb { background: #cdcdcd; }
.thumb-grid { height: 48%; }
.thumb-form { height: 88%; }
.split-h, .split-v { display: flex; align-items: center; justify-content: center; gap: 2px; }
.split-v { flex-direction: column; }
.split-h i, .split-v i { width: 2px; height: 2px; background: #6a6a92; }

.details { display: flex; flex-direction: column; min-height: 0; }
.details-tab { align-self: flex-start; margin: 0; padding: 0 11px 0 12px; height: 18px; background: #fff; font-size: 11px; font-weight: 700; line-height: 18px; }
.details-body { flex: 1; }
.form { flex: 1; display: grid; grid-template-columns: 64px minmax(0, 1fr); grid-auto-rows: max-content; row-gap: 6px; align-items: center; align-content: start; padding: 9px 9px 0; }
.f-label { white-space: nowrap; }
.f-top { align-self: start; padding-top: 6px; }
.types { display: flex; align-items: center; height: 18px; white-space: nowrap; }
.radio { display: flex; align-items: center; gap: 3px; margin-left: 8px; }
.radio-on { margin-left: 6px; font-weight: 700; }
.radio input { appearance: none; width: 13px; height: 13px; margin: 0; border: 1px solid #333; border-radius: 50%; background: #fff; }
.radio input:checked { background: radial-gradient(#333 0 3px, #fff 4px); }
.sigma { margin-left: 14px; width: 11px; font: 15px/18px "Liberation Serif", serif; }
.sigma-2 { margin-left: 22px; font-weight: 700; color: #444; }
.fx { margin-left: 22px; font: italic 700 10px/18px "Liberation Serif", serif; }
.text { width: 100%; height: 23px; padding: 0 5px 2px; border: 1px solid #767676; background: #fff; border-radius: 0; min-width: 0; }
.text-off { background: #f0f0f0; border-color: #ccc; box-shadow: inset 0 0 0 1px #fff; }
.num { text-align: right; }
.with-button { display: flex; gap: 7px; margin-right: 1px; }
.edit { display: grid; place-items: center; width: 24px; height: 24px; flex: none; background: #e3e3e3; border: 1px solid #adadad; }
.values { display: grid; grid-template-columns: 14px 135px 47px 93px; row-gap: 6px; align-items: center; margin-top: 5px; }
.values label[for$="v"] { padding-left: 12px; }

.viewer { display: flex; flex-direction: column; min-height: 0; }
.viewbar { display: flex; align-items: center; height: 23px; flex: none; }
.viewbar .flat { width: 22px; height: 22px; flex: none; }
.viewbar svg { width: 18px; height: 18px; }
.bar-sep { width: 6px; height: 22px; background: linear-gradient(#fff, #fff) 2px 0 / 1px 100% no-repeat; }
.bar-group { display: flex; flex: 1; justify-content: space-between; padding-left: 5px; }
.scene { display: block; flex: 1; min-height: 0; width: 100%; background: #fff; }

.ghost { position: absolute; left: 538px; top: 762px; right: 278px; bottom: 0; display: flex; align-items: flex-start; gap: 3px; padding: 6px 9px; color: rgba(0, 0, 0, .13); background: rgba(255, 255, 255, .09); border: 1px solid rgba(0, 0, 0, .05); box-shadow: 0 0 8px rgba(0, 0, 0, .04); pointer-events: none; line-height: 16px; }
.ghost svg { opacity: .35; }

.svg-dollar { font: 700 14px "Liberation Serif", serif; }
.svg-coin { font: 700 11px "Liberation Serif", serif; }
.svg-fie { font: 700 8px "Liberation Sans", sans-serif; }
.svg-x2 { font: 700 8px "Liberation Sans", sans-serif; fill: #1010e8; }
.svg-face { font: 700 9px "Open Sans", sans-serif; }
.svg-face-top { font-size: 8px; }
```
FILE: app.js
```js
// kind, level, code, unit exponent, summary, A, C, quantity, rate, amount, open
const rows = [
  ["root", 0, "Bill of quantities", "", "Bill of quantities", "", "", "", "", "3.195.478,08", 1],
  ["chapter", 1, "C", "", "Cimentaciones", "", "", "", "", "93.023,95", 1],
  ["chapter", 2, "CS", "", "Superficiales", "", "", "", "", "93.023,95", 1],
  ["chapter", 3, "CSL", "", "Losas", "", "", "", "", "93.023,95", 1],
  ["item", 4, "CSL010", "3", "Losa de cimen...", "", "", "529.90", "175,55", "93.023,95", 1],
  ["line", 5, "", "", "Floor:Defa...", "1.00", "504.33", "504.33", "", "", 0],
  ["line", 5, "", "", "Floor:Defa...", "1.00", "25.57", "25.57", "", "", 0],
  ["chapter", 1, "E", "", "Estructuras", "", "", "", "", "1.079.288,36", 1],
  ["chapter", 2, "EH", "", "Hormigón armado", "", "", "", "", "1.079.288,36", 1],
  ["chapter", 3, "EHE", "", "Escaleras", "", "", "", "", "113.844,38", 1],
  ["item", 4, "EHE010", "2", "Losa de escale...", "", "", "1265.50", "89,96", "113.844,38", 0],
  ["chapter", 3, "EHS", "", "Pilares", "", "", "", "", "235.249,71", 1],
  ["item", 4, "EHS011", "3", "Pilar de secció...", "", "", "452.83", "519,51", "235.249,71", 0],
  ["chapter", 3, "EHR", "", "Forjados reticulares", "", "", "", "", "730.194,27", 1],
  ["item", 4, "EHR010", "2", "Forjado reticul...", "", "", "9984.88", "73,13", "730.194,27", 0],
  ["chapter", 1, "F", "", "Fachadas y particiones", "", "", "", "", "1.290.332,18", 1],
  ["chapter", 2, "FF", "", "Fábrica no estructural", "", "", "", "", "162.051,89", 1],
  ["chapter", 3, "FFX", "", "Hoja exterior cara ...", "", "", "", "", "109.044,40", 1],
  ["item", 4, "FFX020", "2", "Hoja exterior ...", "", "", "2868.08", "38,02", "109.044,40", 0],
  ["chapter", 3, "FFT", "", "Hoja interior con a...", "", "", "", "", "53.007,49", 1],
  ["item", 4, "FFT020", "2", "Hoja interior d...", "", "", "2807.60", "18,88", "53.007,49", 0],
  ["chapter", 2, "FB", "", "Tabiquería de entrama...", "", "", "", "", "122.894,09", 1],
  ["chapter", 3, "FBY", "", "De placas de yeso ...", "", "", "", "", "122.894,09", 1],
  ["item", 4, "FBY010", "2", "Tabique múlti...", "", "", "3285.06", "37,41", "122.894,09", 0],
  ["chapter", 2, "FT", "", "Sistemas de tabiquería", "", "", "", "", "11.776,36", 1],
  ["chapter", 3, "FTS", "", "De fábrica", "", "", "", "", "11.776,36", 1],
  ["item", 4, "FTS020", "2", "Partición interi...", "", "", "304.62", "38,67", "11.776,36", 0]
];
const icons = { chapter: "i-folder", item: "i-wall", line: "i-detail" };
const eur = v => v ? v + " EUR" : "";

document.getElementById("rows").innerHTML = rows.map((r, n) => {
  const [kind, level, code, exp, summary, a, c, qty, rate, amount, open] = r;
  const chev = kind === "line" ? '<span class="chev"></span>'
    : `<svg class="chev"><use href="#${open ? "i-down" : "i-right"}"/></svg>`;
  const ico = icons[kind] ? `<svg class="ico"><use href="#${icons[kind]}"/></svg>` : "";
  const total = kind === "root" || kind === "chapter";
  return `<tr class="${kind}${n === 5 ? " picked" : ""}">
    <td class="l"><div class="node" style="padding-left:${level * 21}px">${chev}${ico}<span class="${kind === "root" ? "root" : ""}">${code}</span></div></td>
    <td class="l">${exp ? `m<sup>${exp}</sup>` : ""}</td>
    <td class="l"><span class="pad" style="padding-left:${level * 21}px">${summary}</span></td>
    <td>${a}</td><td></td><td>${c}</td><td></td>
    <td class="${qty ? "soft" : ""}">${qty}</td><td>${eur(rate)}</td>
    <td class="${total ? "total soft" : amount ? "soft" : ""}">${eur(amount)}</td></tr>`;
}).join("");

// Balcony railings along the long facade and small fixings on the walls.
const parts = [];
const rail = (x0, y0, x1, y1, n, color, alpha) => {
  for (let i = 0; i <= n; i++) {
    const t = i / n, s = 0.7 + 0.3 * t;
    const x = x0 + (x1 - x0) * t, y = y0 + (y1 - y0) * t;
    parts.push(`<path d="M${x - 9 * s} ${y - 4 * s}l${5 * s} ${-4 * s} ${14 * s} ${9 * s}q${1 * s} ${1 * s} 0 ${2 * s}l${-5 * s} ${4 * s}z" fill="#888" fill-opacity=".14" stroke="${color}" stroke-opacity="${alpha}"/><path d="M${x - 6 * s} ${y - 13 * s}v${8 * s}" stroke="${color}" stroke-opacity="${alpha}" stroke-width="1.500"/>`);
  }
};
rail(806, 592, 1040, 768, 15, "#3d0340", 0.8);
rail(806, 616, 1040, 802, 15, "#3a1e04", 0.8);
rail(806, 630, 1002, 790, 13, "#4a2705", 0.5);
rail(806, 645, 1035, 832, 15, "#3a1e04", 0.8);
parts.push('<path d="M802 598l268 208M802 624l266 214" fill="none" stroke="#2e1804" stroke-opacity=".7" stroke-width="2"/>');
parts.push('<path d="M802 640l245 210M802 610l230 178" fill="none" stroke="#2e1804" stroke-opacity=".6" stroke-dasharray="5 1"/>');
parts.push('<path d="M1007 744v54M1024 762v48M1053 763v30M1051 798v24M991 748v26M1016 732v22" stroke="#2e1010" stroke-opacity=".8" stroke-width="1.500"/>');
const fix = (x, y, h) => parts.push(`<path d="M${x} ${y}v${h}" stroke="#200510" stroke-opacity=".75" stroke-width="1.500"/>`);
[[1031, 478], [1040, 482], [1031, 488], [1059, 494], [1069, 485], [1069, 492], [1079, 496], [1100, 501], [1089, 505], [1111, 503], [1110, 516], [1125, 513],
 [1031, 494], [1049, 505], [1068, 514], [1078, 518], [1067, 535], [1088, 525], [1086, 540], [1098, 538], [1107, 548], [1097, 530], [1123, 525], [1122, 556], [1127, 545]].forEach(([x, y]) => fix(x, y, 4));
[[896, 525], [906, 510], [952, 497], [961, 494], [981, 486], [940, 510], [931, 521], [962, 517], [962, 523], [982, 518], [991, 517], [1000, 513], [1000, 522],
 [963, 540], [982, 534], [991, 530], [1005, 508], [932, 526], [942, 530], [905, 552], [915, 557], [930, 554], [926, 563], [1005, 526]].forEach(([x, y]) => fix(x, y, 5));
for (let i = 0; i < 12; i++) {
  parts.push(`<path d="M${968 + i * 16} ${602 + i * 9}v20" stroke="#cfcfcf"/>`);
}
document.getElementById("details").innerHTML = parts.join("");
```
